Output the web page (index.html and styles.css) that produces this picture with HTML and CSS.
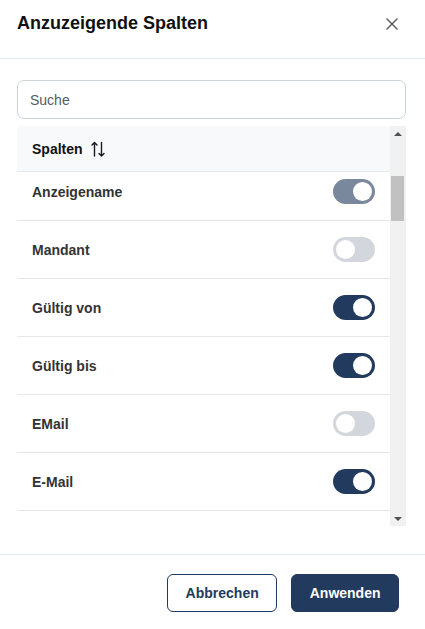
FILE: index.html
```html
<!DOCTYPE html>
<html lang="de">
<head>
<meta charset="utf-8">
<title>Anzuzeigende Spalten</title>
<link rel="stylesheet" href="styles.css">
</head>
<body>
<div class="modal">
  <header class="modal-header">
    <h2 class="modal-title">Anzuzeigende Spalten</h2>
    <button class="close-btn" type="button" aria-label="Schließen">
      <svg width="12" height="12" viewBox="0 0 12 12"><path d="M1 1L11 11M11 1L1 11" stroke="#555" stroke-width="1.4" stroke-linecap="round"/></svg>
    </button>
  </header>
  <div class="modal-body">
    <input class="search" type="text" placeholder="Suche">
    <div class="table">
      <div class="table-main">
        <div class="table-head">
          <span>Spalten</span>
          <svg class="sort-icon" width="14" height="16" viewBox="0 0 14 16"><path d="M3.5 15V1.5M1 4L3.5 1.5L6 4M10.5 1.5V15M8 12.5L10.5 15L13 12.5" fill="none" stroke="#1a1a1a" stroke-width="1.4" stroke-linecap="round" stroke-linejoin="round"/></svg>
        </div>
        <div class="table-body">
          <ul class="rows">
            <li class="row"><span>Anzeigename</span><span class="toggle locked"></span></li>
            <li class="row"><span>Mandant</span><span class="toggle"></span></li>
            <li class="row"><span>Gültig von</span><span class="toggle on"></span></li>
            <li class="row"><span>Gültig bis</span><span class="toggle on"></span></li>
            <li class="row"><span>EMail</span><span class="toggle"></span></li>
            <li class="row"><span>E-Mail</span><span class="toggle on"></span></li>
          </ul>
        </div>
      </div>
      <div class="scrollbar" aria-hidden="true">
        <span class="sb-btn sb-up"></span>
        <span class="sb-track"><span class="sb-thumb"></span></span>
        <span class="sb-btn sb-down"></span>
      </div>
    </div>
  </div>
  <footer class="modal-footer">
    <button class="btn btn-outline" type="button">Abbrechen</button>
    <button class="btn btn-primary" type="button">Anwenden</button>
  </footer>
</div>
</body>
</html>
```

FILE: styles.css
```css
html, body {
  margin: 0;
  padding: 0;
  background: #fff;
}

body {
  font-family: "Liberation Sans", Arial, sans-serif;
  color: #333;
}

.modal {
  width: 425px;
  height: 629px;
  display: flex;
  flex-direction: column;
  overflow: hidden;
}

.modal-header {
  height: 58px;
  flex: none;
  display: flex;
  justify-content: space-between;
  align-items: flex-start;
  padding: 0 21px 0 17px;
  border-bottom: 1px solid #dfe7ef;
}

.modal-title {
  margin: 0;
  padding-top: 12px;
  font-size: 18px;
  line-height: 22px;
  font-weight: 700;
  color: #111;
}

.close-btn {
  margin-top: 12px;
  width: 24px;
  height: 24px;
  padding: 0;
  border: 0;
  background: none;
  display: flex;
  align-items: center;
  justify-content: center;
  cursor: pointer;
}

.modal-body {
  flex: none;
  padding: 21px 19px 28px 17px;
}

.search {
  display: block;
  width: 100%;
  box-sizing: border-box;
  height: 39px;
  margin: 0 0 7px;
  padding: 0 12px;
  border: 1px solid #cfd4da;
  border-radius: 7px;
  font: 14px "Liberation Sans", Arial, sans-serif;
  color: #333;
  outline: none;
}

.search::placeholder {
  color: #535a63;
}

.table {
  height: 400px;
  display: flex;
}

.table-main {
  flex: 1;
  min-width: 0;
  display: flex;
  flex-direction: column;
}

.table-head {
  height: 46px;
  flex: none;
  box-sizing: border-box;
  display: flex;
  align-items: center;
  gap: 8px;
  padding-left: 15px;
  background: #f8f9fa;
  border-bottom: 1px solid #e6e8eb;
  font-size: 14px;
  font-weight: 700;
  color: #111;
}

.table-body {
  flex: 1;
  overflow: hidden;
}

.rows {
  list-style: none;
  margin: -9px 0 0;
  padding: 0;
}

.row {
  height: 58px;
  box-sizing: border-box;
  display: flex;
  align-items: center;
  justify-content: space-between;
  padding: 0 15px 0 15px;
  border-bottom: 1px solid #e6e6e6;
  font-size: 14px;
  font-weight: 700;
  color: #333;
}

.toggle {
  position: relative;
  flex: none;
  width: 42px;
  height: 25px;
  border-radius: 13px;
  background: #d3d6dc;
}

.toggle::after {
  content: "";
  position: absolute;
  top: 3px;
  left: 3px;
  width: 19px;
  height: 19px;
  border-radius: 50%;
  background: #fff;
}

.toggle.on {
  background: #223a5e;
}

.toggle.locked {
  background: #7a889e;
}

.toggle.on::after,
.toggle.locked::after {
  left: auto;
  right: 3px;
}

.scrollbar {
  width: 16px;
  flex: none;
  display: flex;
  flex-direction: column;
  background: #f1f1f1;
}

.sb-btn {
  height: 15px;
  flex: none;
  display: flex;
  align-items: center;
  justify-content: center;
}

.sb-btn::before {
  content: "";
  width: 0;
  height: 0;
  border-left: 4px solid transparent;
  border-right: 4px solid transparent;
}

.sb-up::before {
  border-bottom: 4px solid #505050;
}

.sb-down::before {
  border-top: 4px solid #505050;
}

.sb-track {
  flex: 1;
  padding: 35px 2px 0 1px;
}

.sb-thumb {
  display: block;
  height: 45px;
  background: #c1c1c1;
}

.modal-footer {
  flex: 1;
  display: flex;
  justify-content: flex-end;
  align-items: flex-start;
  gap: 14px;
  padding: 19px 26px 0;
  border-top: 1px solid #dfe7ef;
}

.btn {
  height: 38px;
  padding: 0 17.5px;
  border: 1px solid #223a5e;
  border-radius: 6px;
  font: 700 14px "Liberation Sans", Arial, sans-serif;
  cursor: pointer;
}

.btn-outline {
  background: #fff;
  color: #223a5e;
}

.btn-primary {
  background: #223a5e;
  color: #fff;
}
```
